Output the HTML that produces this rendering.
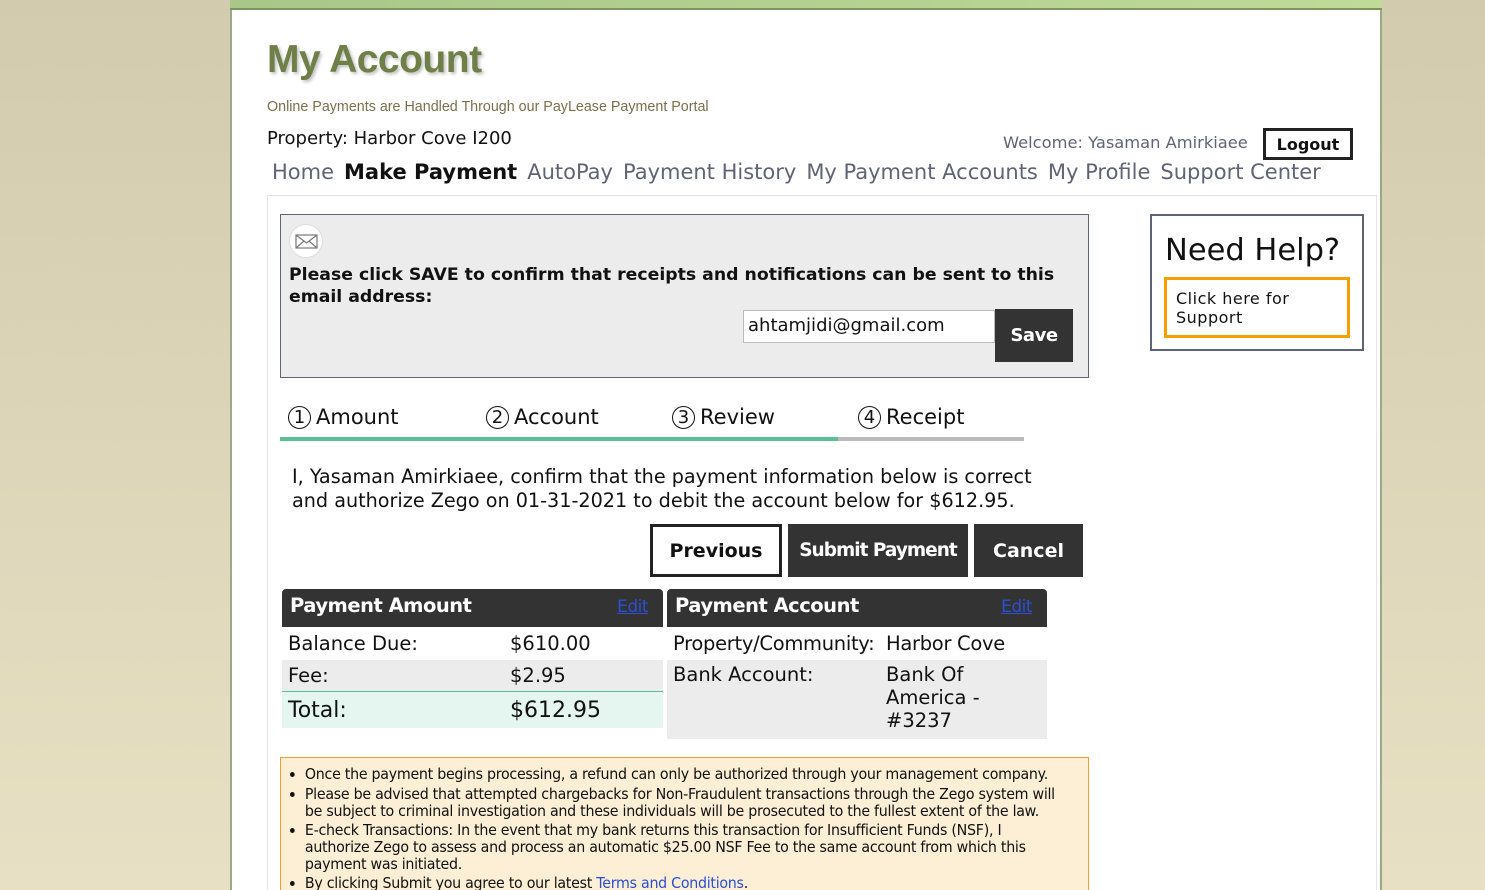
<!DOCTYPE html>
<html><head><meta charset="utf-8"><style>
*{box-sizing:border-box;margin:0;padding:0}
html{overflow:hidden;width:1485px;height:890px}
body{width:1485px;height:890px;overflow:hidden;background:linear-gradient(#d3cbad,#e8e0c4);font-family:"DejaVu Sans","Liberation Sans",sans-serif;position:relative;color:#111}
.a{position:absolute}
.page{left:230px;top:0;width:1152px;height:890px;background:#fff;border-left:2px solid #9aaa86;border-right:2px solid #9aaa86}
.topbar{left:230px;top:0;width:1152px;height:10px;background:linear-gradient(90deg,#a8c788,#c0da98);border-bottom:2px solid #7c9460}
.btn{background:#333;color:#fff;font-weight:bold;display:flex;align-items:center;justify-content:center}
.nav span{margin-right:10px}
.c{display:inline-block;width:23px;height:23px;border:1px solid #111;border-radius:50%;font-size:18px;line-height:21px;text-align:center;vertical-align:1px;margin-right:5px}
.notice li{white-space:nowrap}
</style></head><body>
<div class="a page"></div>
<div class="a topbar"></div>
<div class="a" style="left:267px;top:38px;font:bold 39px 'Liberation Sans',sans-serif;color:#6e7f48;text-shadow:2px 2px 3px rgba(0,0,0,.25);letter-spacing:-0.5px">My Account</div>
<div class="a" style="left:267px;top:99px;font:14.3px 'Liberation Sans',sans-serif;color:#7b6e4c">Online Payments are Handled Through our PayLease Payment Portal</div>
<div class="a" style="left:267px;top:128px;font-size:18px">Property: Harbor Cove I200</div>
<div class="a" style="left:1003px;top:133px;font-size:16.3px;color:#5f6475">Welcome: Yasaman Amirkiaee</div>
<div class="a" style="left:1263px;top:128px;width:90px;height:32px;border:3px solid #222;font-weight:bold;font-size:16px;display:flex;align-items:center;justify-content:center">Logout</div>
<div class="a nav" style="left:272px;top:160px;font-size:21px;color:#5f6475;white-space:nowrap"><span>Home</span><span style="color:#111;font-weight:bold">Make Payment</span><span>AutoPay</span><span>Payment History</span><span>My Payment Accounts</span><span>My Profile</span><span>Support Center</span></div>
<div class="a" style="left:267px;top:195px;width:1110px;height:700px;border:1px solid #e4e4e4"></div>
<!-- email box -->
<div class="a" style="left:280px;top:214px;width:809px;height:164px;background:#ececec;border:1px solid #5f6475"></div>
<div class="a" style="left:289px;top:224px;width:34px;height:34px;border-radius:50%;background:#fff;border:1px solid #ddd"><svg width="34" height="34" viewBox="0 0 34 34"><rect x="6" y="10" width="21" height="13" fill="none" stroke="#777" stroke-width="1.2"/><path d="M6 10l10.5 8 10.5-8M6 23l8-7M27 23l-8-7" fill="none" stroke="#777" stroke-width="1.2"/></svg></div>
<div class="a" style="left:289px;top:264px;width:790px;font-weight:bold;font-size:17.3px;line-height:22px">Please click SAVE to confirm that receipts and notifications can be sent to this email address:</div>
<div class="a" style="left:743px;top:310px;width:252px;height:33px;background:#fff;border:1px solid #bbb;font-size:18px;padding:4px 4px">ahtamjidi@gmail.com</div>
<div class="a btn" style="left:995px;top:309px;width:78px;height:53px;font-size:18px;letter-spacing:-0.5px">Save</div>
<!-- steps -->
<div class="a" style="left:288px;top:405px;font-size:21px;white-space:nowrap"><span style="position:absolute;left:0"><span class="c">1</span>Amount</span><span style="position:absolute;left:198px"><span class="c">2</span>Account</span><span style="position:absolute;left:384px"><span class="c">3</span>Review</span><span style="position:absolute;left:570px"><span class="c">4</span>Receipt</span></div>
<div class="a" style="left:280px;top:437px;width:558px;height:4px;background:#5dbf96"></div>
<div class="a" style="left:838px;top:437px;width:186px;height:4px;background:#bbb"></div>
<div class="a" style="left:292px;top:465px;font-size:19.2px;line-height:24px;width:760px">I, Yasaman Amirkiaee, confirm that the payment information below is correct and authorize Zego on 01-31-2021 to debit the account below for $612.95.</div>
<div class="a" style="left:650px;top:524px;width:132px;height:53px;border:3px solid #222;font-weight:bold;font-size:19px;display:flex;align-items:center;justify-content:center">Previous</div>
<div class="a btn" style="left:788px;top:524px;width:180px;height:53px;font-size:18.5px;letter-spacing:-1px">Submit Payment</div>
<div class="a btn" style="left:974px;top:524px;width:109px;height:53px;font-size:19px">Cancel</div>
<!-- tables -->
<div class="a" style="left:282px;top:589px;width:381px;font-size:19.5px">
<div style="background:#333;color:#fff;height:38px;border-radius:4px 4px 0 0;position:relative;font-weight:bold;padding:5px 8px;letter-spacing:-0.5px">Payment Amount<span style="position:absolute;right:15px;top:8px;color:#2a4fd6;text-decoration:underline;font-weight:normal;font-size:17px">Edit</span></div>
<div style="height:33px;display:flex;align-items:center;padding-left:6px"><span style="width:222px">Balance Due:</span>$610.00</div>
<div style="height:32px;display:flex;align-items:center;padding-left:6px;background:#ececec;border-bottom:1px solid #5dbf96"><span style="width:222px">Fee:</span>$2.95</div>
<div style="height:36px;display:flex;align-items:center;padding-left:6px;background:#e5f5ef;font-size:22px"><span style="width:222px">Total:</span>$612.95</div>
</div>
<div class="a" style="left:667px;top:589px;width:380px;font-size:19.5px">
<div style="background:#333;color:#fff;height:38px;border-radius:4px 4px 0 0;position:relative;font-weight:bold;padding:5px 8px;letter-spacing:-0.5px">Payment Account<span style="position:absolute;right:15px;top:8px;color:#2a4fd6;text-decoration:underline;font-weight:normal;font-size:17px">Edit</span></div>
<div style="height:33px;display:flex;align-items:center;padding-left:6px;white-space:nowrap;letter-spacing:-0.3px"><span style="width:213px">Property/Community:</span>Harbor Cove</div>
<div style="height:79px;display:flex;padding:3px 0 0 6px;background:#ececec;line-height:23px"><span style="width:213px">Bank Account:</span><span style="width:120px">Bank Of America - #3237</span></div>
</div>
<!-- notice -->
<div class="a notice" style="left:280px;top:757px;width:809px;height:140px;background:#fcefd6;border:1px solid #f0a030;font-size:15.3px;line-height:17px;padding:8px 0 0 9px;letter-spacing:-0.3px;overflow:hidden">
<ul style="list-style:disc;padding-left:16px;transform:scaleX(0.93);transform-origin:0 0;width:850px">
<li style="margin-bottom:3px">Once the payment begins processing, a refund can only be authorized through your management company.</li>
<li style="margin-bottom:2px">Please be advised that attempted chargebacks for Non-Fraudulent transactions through the Zego system will<br>be subject to criminal investigation and these individuals will be prosecuted to the fullest extent of the law.</li>
<li style="margin-bottom:2px">E-check Transactions: In the event that my bank returns this transaction for Insufficient Funds (NSF), I<br>authorize Zego to assess and process an automatic $25.00 NSF Fee to the same account from which this<br>payment was initiated.</li>
<li>By clicking Submit you agree to our latest <span style="color:#2a4fd6">Terms and Conditions</span>.</li>
</ul></div>
<!-- help -->
<div class="a" style="left:1150px;top:214px;width:214px;height:137px;border:2px solid #5f6475"></div>
<div class="a" style="left:1165px;top:233px;font-size:30.5px;color:#111">Need Help?</div>
<div class="a" style="left:1164px;top:277px;width:186px;height:61px;border:3px solid #f5a000;padding:9px 9px;font-size:16px;line-height:19px;letter-spacing:0.5px">Click here for Support</div>
</body></html>
